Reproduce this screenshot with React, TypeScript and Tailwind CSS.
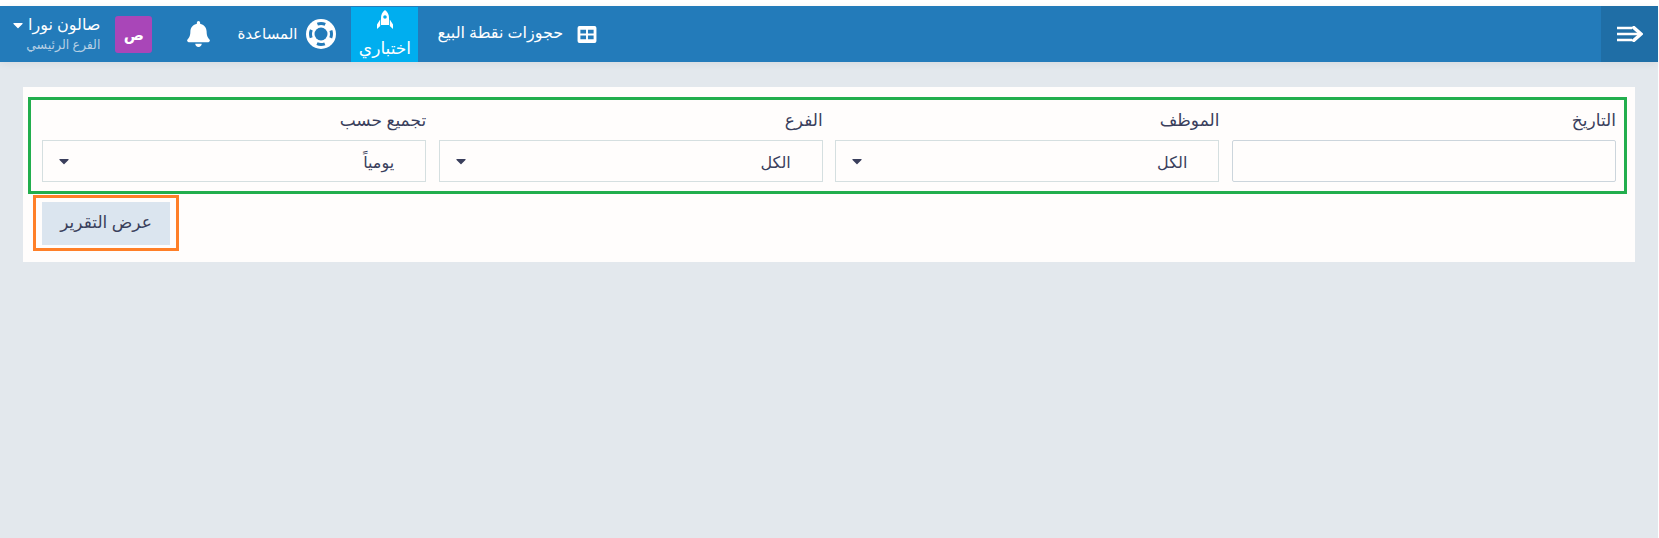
import { FaBell, FaCaretDown } from 'react-icons/fa';

function Field({ label, value }: { label: string; value?: string }) {
  return (
    <div className="flex flex-col">
      <label className="mb-[9px] h-[22px] text-[17px] leading-[22px] text-[#3a3f5c]">{label}</label>
      {value ? (
        <div className="flex h-[42px] items-center justify-between border border-[#d5dfe0] pl-[16px] pr-[31px] text-[16px] text-[#3a3f5c]">
          <span className="pt-[2px]">{value}</span>
          <FaCaretDown className="h-[16px] w-[10px] text-[#3a3f5c]" />
        </div>
      ) : (
        <input className="h-[42px] rounded-[2px] border border-[#ccd5dc] bg-transparent" />
      )}
    </div>
  );
}

export default function App() {
  return (
    <div dir="rtl" className="h-[538px] w-[1659px] bg-white pt-[6px] font-['Noto_Sans','DejaVu_Sans',sans-serif]">
      <div className="mr-auto h-[532px] w-[1658px] bg-[#e3e8ed]">
        {/* Top bar */}
        <header className="flex h-[56px] items-center bg-[#237bba] text-white shadow-[0_2px_8px_rgba(0,0,0,0.06)]">
          <div className="flex h-full w-[57px] items-center justify-center bg-[#1f6ea6]">
            <svg viewBox="0 0 26 16" className="h-[16px] w-[26px]" fill="none" stroke="white">
              <path d="M0 2h15M0 8h22M0 14h15" strokeWidth="2.5" />
              <path d="M15.5 0.5l8.5 7.5-8.5 7.5" strokeWidth="3.5" />
            </svg>
          </div>
          <div className="mr-auto flex h-full items-center pl-[13px]">
            <div className="flex items-center gap-[14px] pl-[19px]">
              <svg viewBox="0 0 20 18" className="h-[17px] w-[20px]">
                <path fill="white" fillRule="evenodd" d="M2 0h16a2 2 0 012 2v14a2 2 0 01-2 2H2a2 2 0 01-2-2V2a2 2 0 012-2zM3 4v4h6V4zm8 0v4h6V4zM3 10v4h6v-4zm8 0v4h6v-4z" />
              </svg>
              <span className="mb-[5px] text-[16px]">حجوزات نقطة البيع</span>
            </div>
            <div className="mt-[1px] flex h-[55px] w-[67px] flex-col items-center bg-[#00aeef] pt-[3px]">
              <svg viewBox="0 0 16 19" className="h-[19px] w-[16px]">
                <path fill="white" fillRule="evenodd" d="M8 0c3 2 4 5 4 8v7H4V8c0-3 1-6 4-8zm0 5.2a1.8 1.8 0 100 3.6 1.8 1.8 0 000-3.6z" />
                <path fill="white" d="M3.2 9.5L0 14.5V19l3.2-3zM12.8 9.5l3.2 5V19l-3.2-3z" />
              </svg>
              <span className="mt-[6px] text-[17px] leading-[26px]">اختباري</span>
            </div>
            <div className="flex items-center gap-[9px] pr-[15px] pl-[27px]">
              <svg viewBox="0 0 30 30" className="h-[30px] w-[30px]" fill="none">
                <circle cx="15" cy="15" r="15" fill="white" />
                <circle cx="15" cy="15" r="6.5" fill="#237bba" />
                <circle cx="15" cy="15" r="10.5" stroke="#237bba" strokeWidth="3" strokeDasharray="8 8.5" strokeDashoffset="4" />
              </svg>
              <span className="mb-[2px] text-[15px]">المساعدة</span>
            </div>
            <FaBell className="ml-[35px] h-[26px] w-[23px]" />
            <div className="flex h-[37px] w-[37px] items-center justify-center rounded-[3px] bg-[#a946b8] text-[15px] font-bold">ص</div>
            <div className="mr-[15px] flex flex-col">
              <div className="flex items-center gap-[5px] text-[16px] leading-[20px]">
                <span className="mb-[2px]">صالون نورا</span>
                <FaCaretDown className="h-[16px] w-[10px]" />
              </div>
              <span className="text-[12.5px] leading-[18px] text-[#b5cfe4]">الفرع الرئيسي</span>
            </div>
          </div>
        </header>

        {/* Report filters */}
        <main className="pr-[23px] pt-[25px]">
          <div className="h-[175px] w-[1612px] bg-[#fffdfc] pt-[10px]">
            <div className="mr-[8px] w-[1599px] border-[3px] border-[#22ae4d] py-[9px] pl-[11px] pr-[8px]">
              <div className="grid grid-cols-4 gap-[12.5px]">
                <Field label="التاريخ" />
                <Field label="الموظف" value="الكل" />
                <Field label="الفرع" value="الكل" />
                <Field label="تجميع حسب" value="يومياً" />
              </div>
            </div>
            <div className="ml-[10px] mr-auto mt-[1px] flex h-[56px] w-[146px] items-center justify-center border-[3px] border-[#ff7f27]">
              <button className="h-[43px] w-[128px] bg-[#dbe5ef] pb-[2px] text-[17px] text-[#3a3f5c]">عرض التقرير</button>
            </div>
          </div>
        </main>
      </div>
    </div>
  );
}
